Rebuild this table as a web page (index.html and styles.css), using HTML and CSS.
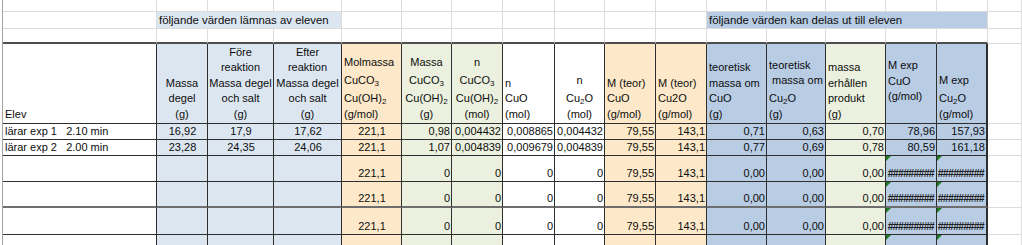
FILE: index.html
```html
<!DOCTYPE html>
<html lang="sv">
<head>
<meta charset="utf-8">
<title>Kopparkarbonat</title>
<link rel="stylesheet" href="styles.css">
</head>
<body>
<div class="sheet">
  <div class="rh"></div>

  <!-- row 0 -->
  <div class="c"></div><div class="c"></div><div class="c"></div><div class="c"></div><div class="c"></div><div class="c"></div><div class="c"></div><div class="c"></div><div class="c"></div><div class="c"></div><div class="c"></div><div class="c"></div><div class="c"></div><div class="c"></div><div class="c"></div><div class="c"></div><div class="c"></div>

  <!-- row 1 -->
  <div class="c"></div>
  <div class="c lab lb1">följande värden lämnas av eleven</div>
  <div class="c"></div><div class="c"></div><div class="c"></div><div class="c"></div><div class="c"></div><div class="c"></div><div class="c"></div>
  <div class="c lab lb2">följande värden kan delas ut till eleven</div>
  <div class="c"></div>

  <!-- row 2 -->
  <div class="c tp"></div><div class="c tp"></div><div class="c tp"></div><div class="c tp"></div><div class="c tp"></div><div class="c tp"></div><div class="c tp"></div><div class="c tp"></div><div class="c tp"></div><div class="c tp"></div><div class="c tp"></div><div class="c tp"></div><div class="c tp"></div><div class="c tp"></div><div class="c tp"></div><div class="c tp"></div><div class="c"></div>

  <!-- header row -->
  <div class="t hd"><span>Elev</span></div>
  <div class="t hd mid lb"><span>Massa</span><span>degel</span><span>(g)</span></div>
  <div class="t hd mid lb"><span>Före</span><span>reaktion</span><span>Massa degel</span><span>och salt</span><span>(g)</span></div>
  <div class="t hd mid lb"><span>Efter</span><span>reaktion</span><span>Massa degel</span><span>och salt</span><span>(g)</span></div>
  <div class="t hd pe"><span>Molmassa</span><span class="ls">CuCO<sub>3</sub></span><span class="ls">Cu(OH)<sub>2</sub></span><span>(g/mol)</span></div>
  <div class="t hd mid gr"><span>Massa</span><span class="ls">CuCO<sub>3</sub></span><span class="ls">Cu(OH)<sub>2</sub></span><span>(g)</span></div>
  <div class="t hd mid gr"><span>n</span><span class="ls">CuCO<sub>3</sub></span><span class="ls">Cu(OH)<sub>2</sub></span><span>(mol)</span></div>
  <div class="t hd"><span>n</span><span>CuO</span><span>(mol)</span></div>
  <div class="t hd mid"><span>n</span><span class="ls">Cu<sub>2</sub>O</span><span>(mol)</span></div>
  <div class="t hd pe"><span>M (teor)</span><span>CuO</span><span>(g/mol)</span></div>
  <div class="t hd pe"><span>M (teor)</span><span>Cu2O</span><span>(g/mol)</span></div>
  <div class="t hd bl"><span>teoretisk</span><span>massa om</span><span>CuO</span><span>(g)</span></div>
  <div class="t hd bl"><span>teoretisk</span><span>&nbsp;massa om</span><span class="ls">Cu<sub>2</sub>O</span><span>(g)</span></div>
  <div class="t hd gr"><span>massa</span><span>erhållen</span><span>produkt</span><span>(g)</span></div>
  <div class="t hd bl vc"><span>M exp</span><span>CuO</span><span>(g/mol)</span></div>
  <div class="t hd bl last"><span>M exp</span><span class="ls">Cu<sub>2</sub>O</span><span>(g/mol)</span></div>
  <div class="c"></div>

  <!-- data row 1 -->
  <div class="t d name">lärar exp 1   2.10 min</div>
  <div class="t d mid lb">16,92</div>
  <div class="t d mid lb">17,9</div>
  <div class="t d mid lb">17,62</div>
  <div class="t d mid pe">221,1</div>
  <div class="t d gr">0,98</div>
  <div class="t d gr">0,004432</div>
  <div class="t d">0,008865</div>
  <div class="t d">0,004432</div>
  <div class="t d pe">79,55</div>
  <div class="t d pe">143,1</div>
  <div class="t d bl">0,71</div>
  <div class="t d bl">0,63</div>
  <div class="t d gr">0,70</div>
  <div class="t d bl">78,96</div>
  <div class="t d bl last">157,93</div>
  <div class="c"></div>

  <!-- data row 2 -->
  <div class="t d name">lärar exp 2   2.00 min</div>
  <div class="t d mid lb">23,28</div>
  <div class="t d mid lb">24,35</div>
  <div class="t d mid lb">24,06</div>
  <div class="t d mid pe">221,1</div>
  <div class="t d gr">1,07</div>
  <div class="t d gr">0,004839</div>
  <div class="t d">0,009679</div>
  <div class="t d">0,004839</div>
  <div class="t d pe">79,55</div>
  <div class="t d pe">143,1</div>
  <div class="t d bl">0,77</div>
  <div class="t d bl">0,69</div>
  <div class="t d gr">0,78</div>
  <div class="t d bl">80,59</div>
  <div class="t d bl last">161,18</div>
  <div class="c"></div>

  <!-- data row 3 -->
  <div class="t d name"></div>
  <div class="t d lb"></div><div class="t d lb"></div><div class="t d lb"></div>
  <div class="t d mid pe">221,1</div>
  <div class="t d gr">0</div>
  <div class="t d gr">0</div>
  <div class="t d">0</div>
  <div class="t d">0</div>
  <div class="t d pe">79,55</div>
  <div class="t d pe">143,1</div>
  <div class="t d bl">0,00</div>
  <div class="t d bl">0,00</div>
  <div class="t d gr">0,00</div>
  <div class="t d bl err hash">#########</div>
  <div class="t d bl err hash last">#########</div>
  <div class="c"></div>

  <!-- data row 4 -->
  <div class="t d name thick"></div>
  <div class="t d lb thick"></div><div class="t d lb thick"></div><div class="t d lb thick"></div>
  <div class="t d mid pe thick">221,1</div>
  <div class="t d gr thick">0</div>
  <div class="t d gr thick">0</div>
  <div class="t d thick">0</div>
  <div class="t d thick">0</div>
  <div class="t d pe thick">79,55</div>
  <div class="t d pe thick">143,1</div>
  <div class="t d bl thick">0,00</div>
  <div class="t d bl thick">0,00</div>
  <div class="t d gr thick">0,00</div>
  <div class="t d bl err hash thick">#########</div>
  <div class="t d bl err hash last thick">#########</div>
  <div class="c"></div>

  <!-- data row 5 -->
  <div class="t d name"></div>
  <div class="t d lb"></div><div class="t d lb"></div><div class="t d lb"></div>
  <div class="t d mid pe">221,1</div>
  <div class="t d gr">0</div>
  <div class="t d gr">0</div>
  <div class="t d">0</div>
  <div class="t d">0</div>
  <div class="t d pe">79,55</div>
  <div class="t d pe">143,1</div>
  <div class="t d bl">0,00</div>
  <div class="t d bl">0,00</div>
  <div class="t d gr">0,00</div>
  <div class="t d bl err hash">#########</div>
  <div class="t d bl err hash last">#########</div>
  <div class="c"></div>

  <!-- data row 6 (cut off) -->
  <div class="t d name"></div>
  <div class="t d lb"></div><div class="t d lb"></div><div class="t d lb"></div>
  <div class="t d pe"></div>
  <div class="t d gr"></div>
  <div class="t d gr"></div>
  <div class="t d"></div>
  <div class="t d"></div>
  <div class="t d pe"></div>
  <div class="t d pe"></div>
  <div class="t d bl"></div>
  <div class="t d bl"></div>
  <div class="t d gr"></div>
  <div class="t d bl err"></div>
  <div class="t d bl err last"></div>
  <div class="c"></div>
</div>
</body>
</html>
```

FILE: styles.css
```css
html, body {
  margin: 0;
  padding: 0;
  background: #fff;
  overflow: hidden;
}

body {
  width: 1022px;
  height: 245px;
  font-family: "Liberation Sans", Arial, sans-serif;
  font-size: 11px;
  color: #0d0d0d;
}

.sheet {
  display: grid;
  grid-template-columns: 3px 154px 51px 66px 68px 60px 50px 51px 52px 50px 51px 51px 60px 59px 60px 51px 51px 1fr;
  grid-template-rows: 12px 17px 15px 80px 16px 16px 26px 26px 27px 30px;
}

.sheet > div {
  box-sizing: border-box;
  min-width: 0;
  overflow: hidden;
  white-space: nowrap;
}

.rh {
  grid-column: 1;
  grid-row: 1 / -1;
  border-right: 1px solid #a3a3a3;
}

/* light gridline cell */
.c {
  border-right: 1px solid #dcdcdc;
  border-bottom: 1px solid #dcdcdc;
}

/* top edge of the bordered table */
.c.tp {
  border-bottom: 2px solid #4e4e4e;
}

/* merged label cells */
.lab {
  display: flex;
  align-items: flex-end;
  padding: 0 2px;
  line-height: 15px;
  font-size: 11.4px;
}

.lb1 {
  grid-column: span 3;
  background: #dce6f1;
}

.lb2 {
  grid-column: span 5;
  background: #b8cce4;
}

/* cells inside the table */
.t {
  border-right: 1px solid #2e2e2e;
  border-bottom: 1px solid #2e2e2e;
}

.t.last {
  border-right: 2px solid #2e2e2e;
}

.t.thick {
  border-bottom: 2px solid #6e6e6e;
}

/* header cells */
.hd {
  display: flex;
  flex-direction: column;
  justify-content: flex-end;
  align-items: flex-start;
  padding: 0 2px 1px 2px;
  line-height: 15.5px;
}

.hd span {
  display: block;
}

.hd .ls {
  line-height: 18px;
}

.hd.mid {
  align-items: center;
  text-align: center;
}

.hd.vc {
  justify-content: center;
  padding-bottom: 4px;
}

sub {
  font-size: 8px;
  line-height: 0;
  vertical-align: -2px;
}

/* data cells */
.d {
  display: flex;
  align-items: flex-end;
  justify-content: flex-end;
  padding: 0 1px 0 2px;
  line-height: 15px;
}

.d.mid {
  justify-content: center;
}

.d.name {
  justify-content: flex-start;
  white-space: pre;
}

.hash {
  font-size: 10.5px;
  font-weight: bold;
  letter-spacing: -0.7px;
  color: #1e1e1e;
  padding-right: 2px;
}

.err {
  position: relative;
}

.err::before {
  content: "";
  position: absolute;
  top: 0;
  left: 0;
  border-top: 5px solid #1f7a1f;
  border-right: 5px solid transparent;
}

/* fills */
.lb { background: #dce6f1; }
.pe { background: #fde9c9; }
.gr { background: #ebf1de; }
.bl { background: #b8cce4; }
```
